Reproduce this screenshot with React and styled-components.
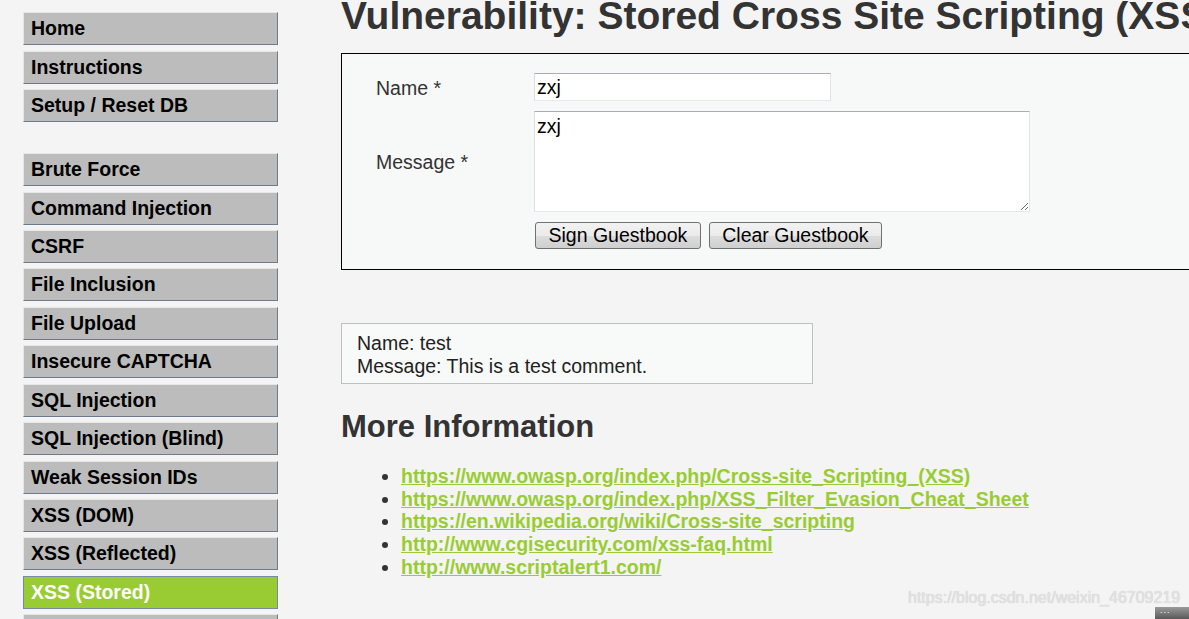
import styled, { createGlobalStyle } from 'styled-components';

const GlobalStyle = createGlobalStyle`
  html, body {
    margin: 0;
    height: 100%;
    overflow: hidden;
    background: #f4f4f4;
    font-family: "Liberation Sans", Arial, sans-serif;
  }
`;

const Page = styled.div`
  display: flex;
  align-items: flex-start;
  position: relative;
  height: 619px;
  overflow: hidden;
`;

const Sidebar = styled.nav`
  width: 255px;
  margin-left: 23px;
  padding-top: 12.3px;
  flex-shrink: 0;
`;

const MenuGroup = styled.ul`
  list-style: none;
  margin: 0 0 31px 0;
  padding: 0;
`;

const MenuItem = styled.li`
  box-sizing: border-box;
  height: 33px;
  line-height: 31px;
  margin-bottom: 5.43px;
  padding-left: 7px;
  font-size: 19.5px;
  font-weight: bold;
  white-space: nowrap;
  color: ${p => (p.$selected ? '#ffffff' : '#000000')};
  background: ${p => (p.$selected ? '#99cc33' : '#bcbcbc')};
  border: 1px solid;
  border-color: ${p => (p.$selected ? '#7888a6' : '#e6e6e6 #6d7b8d #6d7b8d #e6e6e6')};
`;

const Main = styled.main`
  margin-left: 63px;
  width: 900px;
  flex-shrink: 0;
`;

const Title = styled.h1`
  margin: -5.6px 0 14.6px 0;
  font-size: 39px;
  font-weight: bold;
  color: #333;
  white-space: nowrap;
`;

const CodeArea = styled.div`
  border: 1px solid #000;
  background: #f7f8f8;
  padding: 19px 0 20px 34px;
`;

const FormGrid = styled.form`
  display: grid;
  grid-template-columns: 158px auto;
  row-gap: 10px;
  align-items: center;
  justify-items: start;
`;

const Label = styled.label`
  font-size: 19.5px;
  color: #333;
  padding-top: 2px;
`;

const TextInput = styled.input`
  box-sizing: border-box;
  width: 297px;
  height: 28px;
  padding: 0 2px;
  margin: 0;
  font-family: "Liberation Sans", Arial, sans-serif;
  font-size: 19.5px;
  color: #000;
  background: #fff;
  border: 1px solid;
  border-color: #abadb3 #e2e3ea #e3e9ef #dbdfe6;
  outline: none;
`;

const TextArea = styled.textarea`
  box-sizing: border-box;
  width: 496px;
  height: 101px;
  padding: 3px 2px;
  margin: 0;
  font-family: "Liberation Sans", Arial, sans-serif;
  font-size: 19.5px;
  color: #000;
  background: #fff;
  border: 1px solid;
  border-color: #abadb3 #e2e3ea #e3e9ef #dbdfe6;
  outline: none;
`;

const Buttons = styled.div`
  display: flex;
  gap: 8px;
  padding-left: 1px;
`;

const Button = styled.button`
  box-sizing: border-box;
  height: 27px;
  padding: 0 12.5px;
  font-family: "Liberation Sans", Arial, sans-serif;
  font-size: 19.5px;
  color: #000;
  border: 1px solid #707070;
  border-radius: 3px;
  background: linear-gradient(#f2f2f2 0%, #ebebeb 50%, #dddddd 51%, #cfcfcf 100%);
`;

const Comments = styled.div`
  box-sizing: border-box;
  width: 472px;
  margin-top: 53px;
  padding: 8px 15px 6px;
  border: 1px solid #c0c0c0;
  background: #f8f9f9;
  font-size: 19.5px;
  color: #222;
  line-height: 22.6px;
`;

const SubTitle = styled.h2`
  margin: 25px 0 20px 0;
  font-size: 31px;
  font-weight: bold;
  color: #333;
`;

const LinkList = styled.ul`
  margin: 0;
  padding-left: 60px;
  font-size: 19.5px;
  color: #333;
  line-height: 22.6px;
`;

const Link = styled.a`
  color: #99cc33;
  font-weight: bold;
  text-decoration: underline;
`;

const Watermark = styled.div`
  position: absolute;
  left: 908px;
  top: 589px;
  font-size: 16px;
  color: #e2e2e2;
  text-shadow: 0 0 1px #c4c4c4;
  white-space: nowrap;
`;

const CornerTab = styled.div`
  position: absolute;
  left: 1155px;
  top: 607px;
  width: 40px;
  height: 14px;
  background: linear-gradient(#9a9a9a, #4e4e4e);
  color: #fff;
  font-size: 9px;
  line-height: 7px;
  padding-left: 5px;
  letter-spacing: 1px;
`;

const groups = [
  ['Home', 'Instructions', 'Setup / Reset DB'],
  [
    'Brute Force',
    'Command Injection',
    'CSRF',
    'File Inclusion',
    'File Upload',
    'Insecure CAPTCHA',
    'SQL Injection',
    'SQL Injection (Blind)',
    'Weak Session IDs',
    'XSS (DOM)',
    'XSS (Reflected)',
    'XSS (Stored)',
    'CSP Bypass',
  ],
];

const links = [
  'https://www.owasp.org/index.php/Cross-site_Scripting_(XSS)',
  'https://www.owasp.org/index.php/XSS_Filter_Evasion_Cheat_Sheet',
  'https://en.wikipedia.org/wiki/Cross-site_scripting',
  'http://www.cgisecurity.com/xss-faq.html',
  'http://www.scriptalert1.com/',
];

const App = () => {
  return (
    <Page>
      <GlobalStyle />
      <Sidebar>
        {groups.map((g, i) => (
          <MenuGroup key={i}>
            {g.map(item => (
              <MenuItem key={item} $selected={item === 'XSS (Stored)'}>{item}</MenuItem>
            ))}
          </MenuGroup>
        ))}
      </Sidebar>
      <Main>
        <Title>Vulnerability: Stored Cross Site Scripting (XSS)</Title>
        <CodeArea>
          <FormGrid onSubmit={e => e.preventDefault()}>
            <Label>Name *</Label>
            <TextInput defaultValue="zxj" />
            <Label>Message *</Label>
            <TextArea defaultValue="zxj" />
            <span />
            <Buttons>
              <Button type="button">Sign Guestbook</Button>
              <Button type="button">Clear Guestbook</Button>
            </Buttons>
          </FormGrid>
        </CodeArea>
        <Comments>
          Name: test<br />
          Message: This is a test comment.
        </Comments>
        <SubTitle>More Information</SubTitle>
        <LinkList>
          {links.map(l => (
            <li key={l}><Link href="#">{l}</Link></li>
          ))}
        </LinkList>
      </Main>
      <Watermark>https://blog.csdn.net/weixin_46709219</Watermark>
      <CornerTab>...</CornerTab>
    </Page>
  );
};

export default App;
